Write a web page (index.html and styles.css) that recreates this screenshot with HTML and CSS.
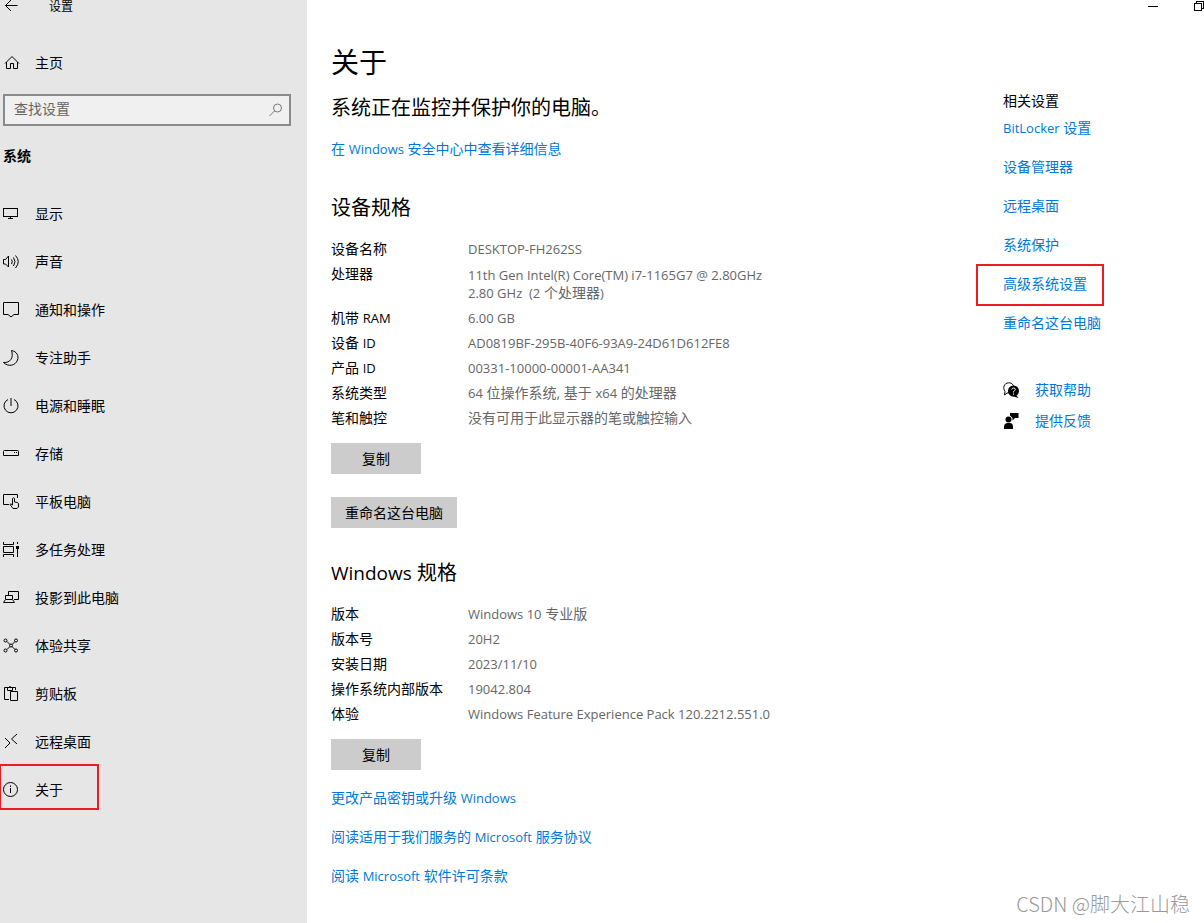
FILE: index.html
```html
<!DOCTYPE html>
<html lang="zh-CN">
<head>
<meta charset="utf-8">
<title>设置</title>
<meta name="viewport" content="width=device-width, initial-scale=1">
<link rel="stylesheet" href="styles.css">
</head>
<body>
<div class="app">
  <div class="sidebar">
    <header class="titlebar">
      <button class="icon-button" type="button" aria-label="返回">
        <svg class="icon" viewBox="0 0 16 16"><path d="M14.500 6.500H2.500M8 1L2.500 6.500L8 12"/></svg>
      </button>
      <span>设置</span>
    </header>
    <a class="home" href="#">
      <svg class="icon" viewBox="0 0 16 16"><path d="M1 8.500L8 1.500L15 8.500M2.500 7V13.500H6.500V8.500H9.500V13.500H13.500V7"/></svg>
      <span>主页</span>
    </a>
    <form class="search">
      <input class="search-input" type="text" aria-label="查找设置" placeholder="查找设置">
      <button class="search-button" type="button" aria-label="搜索">
        <svg class="icon" viewBox="0 0 16 16"><circle cx="9.500" cy="6" r="4"/><path d="M6.500 9L1.500 14"/></svg>
      </button>
    </form>
    <h2 class="group">系统</h2>
    <nav class="nav" aria-label="系统">
      <a class="nav-item" href="#"><svg class="icon crisp" viewBox="0 0 16 16"><path d="M.5 2.500H14.500V10.500H.5ZM7.500 11V13M5 12.500H10"/></svg><span>显示</span></a>
      <a class="nav-item" href="#"><svg class="icon" viewBox="0 0 16 16"><path d="M.5 5.500H2.500L5.500 2V13L2.500 10H.5ZM8.500 5.500Q10 7.500 8.500 10M10.500 3.500Q13.500 7.500 10.500 12M12.500 1.500Q18 7.500 12.500 14"/></svg><span>声音</span></a>
      <a class="nav-item" href="#"><svg class="icon" viewBox="0 0 16 16"><path d="M.5 .5H15.500V12.500H11L8 15L5 12.500H.5Z"/></svg><span>通知和操作</span></a>
      <a class="nav-item" href="#"><svg class="icon" viewBox="0 0 16 16"><path d="M8.500 .500C14 1.500 16 6 14.500 10C12.500 16 5 17 .5 12.500C7 13 11 8 8.500 .500Z"/></svg><span>专注助手</span></a>
      <a class="nav-item" href="#"><svg class="icon" viewBox="0 0 16 16"><path d="M5 1.500A7 7 0 1 0 11 1.500M8 0V8"/></svg><span>电源和睡眠</span></a>
      <a class="nav-item" href="#"><svg class="icon" viewBox="0 0 16 16"><path d="M.5 5.500Q.5 4.500 1.500 4.500H14.500Q15.500 4.500 15.500 5.500V9.500H.5Z"/><path class="fill" d="M11 6h1v1h-1zM13 6h1v1h-1z"/></svg><span>存储</span></a>
      <a class="nav-item" href="#"><svg class="icon" viewBox="0 0 16 16"><path d="M6 10.500H.5V.5H14.500V4M9.500 11V4.500Q10.500 3 11.500 4.500V8L14.500 8.500Q15.500 9 15.500 10V13L14 14.500H10L7 10.500Q7.500 9 9.500 11"/></svg><span>平板电脑</span></a>
      <a class="nav-item" href="#"><svg class="icon" viewBox="0 0 16 16"><path d="M.5 0V2.500H10.500V0M.5 4.500H10.500V10.500H.5ZM.5 15V12.500H10.500V15M14.500 0V2M14.500 6V15"/><path class="fill" d="M13 4h3v3h-3z"/></svg><span>多任务处理</span></a>
      <a class="nav-item" href="#"><svg class="icon" viewBox="0 0 16 16"><path d="M5.500 5V1.500H15.500V9.500H11M2.500 9V5.500H9.500V9M.5 12.500L2.500 9.500H9.500L11.500 12.500Z"/></svg><span>投影到此电脑</span></a>
      <a class="nav-item" href="#"><svg class="icon" viewBox="0 0 16 16"><circle cx="2.500" cy="2.500" r="1.500"/><circle cx="13" cy="2.500" r="1.500"/><circle cx="2.500" cy="12.500" r="1.500"/><circle cx="13" cy="12.500" r="1.500"/><circle cx="8" cy="7.500" r="1.500"/><path d="M4 3.500L7 6.500M12 3.500L9 6.500M4 11.500L7 8.500M12 11.500L9 8.500"/></svg><span>体验共享</span></a>
      <a class="nav-item" href="#"><svg class="icon" viewBox="0 0 16 16"><path d="M6 13.500H1.500V1.500H12.500V4M4.500 4.500V1.500H6Q7 -1 8 1.500H9.500V4.500ZM7.500 5.500H14.500V14.500H7.500Z"/></svg><span>剪贴板</span></a>
      <a class="nav-item" href="#"><svg class="icon" viewBox="0 0 16 16"><path d="M2 4L7 9L2 14M14 0L8.500 5L14 10"/></svg><span>远程桌面</span></a>
      <a class="nav-item current" href="#" aria-current="page"><svg class="icon" viewBox="0 0 16 16"><circle cx="7.500" cy="7.500" r="7"/><path d="M7.500 6V11M7.500 3.500V5"/></svg><span>关于</span></a>
    </nav>
  </div>

  <div class="page">
    <div class="window-controls">
      <button class="icon-button" type="button" aria-label="最小化"><svg class="icon crisp" viewBox="0 0 16 16"><path d="M3 6.500H13"/></svg></button>
      <button class="icon-button" type="button" aria-label="还原"><svg class="icon crisp" viewBox="0 0 16 16"><path d="M3.500 3.500H10.500V10.500H3.500ZM5.500 3V1.500H12.500V8.500H11"/></svg></button>
    </div>
    <div class="columns">
      <main class="content">
        <h1 class="title">关于</h1>
        <p class="status">系统正在监控并保护你的电脑。</p>
        <a class="link" href="#">在 <span class="latin">Windows</span> 安全中心中查看详细信息</a>

        <h2 class="section-title">设备规格</h2>
        <dl class="specs">
          <dt>设备名称</dt><dd><span class="latin">DESKTOP-FH262SS</span></dd>
          <dt>处理器</dt><dd class="multiline"><span class="latin">11th Gen Intel(R) Core(TM) i7-1165G7 @ 2.80GHz</span><br><span class="latin">2.80 GHz&nbsp; (2</span> 个处理器<span class="latin">)</span></dd>
          <dt>机带 <span class="latin">RAM</span></dt><dd><span class="latin">6.00 GB</span></dd>
          <dt>设备 <span class="latin">ID</span></dt><dd><span class="latin">AD0819BF-295B-40F6-93A9-24D61D612FE8</span></dd>
          <dt>产品 <span class="latin">ID</span></dt><dd><span class="latin">00331-10000-00001-AA341</span></dd>
          <dt>系统类型</dt><dd><span class="latin">64</span> 位操作系统, 基于 <span class="latin">x64</span> 的处理器</dd>
          <dt>笔和触控</dt><dd>没有可用于此显示器的笔或触控输入</dd>
        </dl>
        <div class="actions">
          <button class="button" type="button">复制</button>
          <button class="button" type="button">重命名这台电脑</button>
        </div>

        <h2 class="section-title"><span class="latin-large">Windows</span> 规格</h2>
        <dl class="specs">
          <dt>版本</dt><dd><span class="latin">Windows 10</span> 专业版</dd>
          <dt>版本号</dt><dd><span class="latin">20H2</span></dd>
          <dt>安装日期</dt><dd><span class="latin">2023/11/10</span></dd>
          <dt>操作系统内部版本</dt><dd><span class="latin">19042.804</span></dd>
          <dt>体验</dt><dd><span class="latin">Windows Feature Experience Pack 120.2212.551.0</span></dd>
        </dl>
        <div class="actions">
          <button class="button" type="button">复制</button>
        </div>
        <div class="links">
          <a class="link" href="#">更改产品密钥或升级 <span class="latin">Windows</span></a>
          <a class="link" href="#">阅读适用于我们服务的 <span class="latin">Microsoft</span> 服务协议</a>
          <a class="link" href="#">阅读 <span class="latin">Microsoft</span> 软件许可条款</a>
        </div>
      </main>

      <aside class="related">
        <h2 class="related-title">相关设置</h2>
        <div class="links">
          <a class="link" href="#"><span class="latin">BitLocker</span> 设置</a>
          <a class="link" href="#">设备管理器</a>
          <a class="link" href="#">远程桌面</a>
          <a class="link" href="#">系统保护</a>
          <a class="link marked" href="#">高级系统设置</a>
          <a class="link" href="#">重命名这台电脑</a>
        </div>
        <div class="support">
          <a class="link support-link" href="#"><svg class="icon" viewBox="0 0 16 16"><path d="M8 10.500L4 11L1.500 13L2 9.500C-.5 6 1 1 5.500 .8C8 .7 10 2 10.500 4"/><circle class="fill" cx="10.500" cy="9" r="5.500"/><path class="fill" d="M13 13L15.500 16L9 14Z"/><path class="mark" d="M8.800 7.500Q9 6 10.500 6Q12.300 6 12.300 7.500Q12.200 8.500 10.500 9.500V10.500M10.500 11.500V12.700"/></svg><span>获取帮助</span></a>
          <a class="link support-link" href="#"><svg class="icon" viewBox="0 0 16 16"><circle class="fill" cx="5.500" cy="6.500" r="3"/><path class="fill" d="M1 16V14Q1 10 5 10H7Q10 10 10 14V16ZM7 0H15.500V5H12L9.500 7.500V5L7 2.500Z"/></svg><span>提供反馈</span></a>
        </div>
      </aside>
    </div>
    <div class="watermark">CSDN @脚大江山稳</div>
  </div>
</div>
</body>
</html>
```
FILE: styles.css
```css
*,
*::before {
  box-sizing: border-box;
}

body {
  margin: 0;
  background: #fff;
  color: #000;
  font-family: "Open Sans", "Noto Sans CJK SC", sans-serif;
  font-size: 14px;
  line-height: 18px;
}

h1,
h2,
p,
dl,
dd {
  margin: 0;
  font-weight: 400;
}

a {
  color: inherit;
  text-decoration: none;
}

button,
input {
  font: inherit;
  color: inherit;
}

.latin {
  font-size: 13px;
}

.latin-large {
  font-size: 19px;
}

.icon {
  display: block;
  flex: none;
  width: 16px;
  height: 16px;
  fill: none;
  stroke: currentColor;
  overflow: visible;
}

.icon .fill {
  fill: currentColor;
  stroke: none;
}

.icon .mark {
  stroke: #fff;
}

.crisp {
  shape-rendering: crispEdges;
}

.icon-button {
  padding: 0;
  border: 0;
  background: none;
}

.app {
  display: grid;
  grid-template-columns: 307px 1fr;
  min-height: 100vh;
}

.sidebar {
  background: #e6e6e6;
  padding: 0 16px 0 3px;
}

.titlebar {
  display: flex;
  align-items: center;
  gap: 30px;
  height: 14px;
  font-size: 12px;
}

.home {
  display: flex;
  align-items: center;
  gap: 15px;
  height: 48px;
  margin: 25px 0 7px;
  padding-left: 1px;
}

.search {
  display: flex;
  align-items: center;
  height: 32px;
  padding-right: 5px;
  border: 2px solid #8a8a8a;
  background: #f0f0f0;
}

.search-input {
  flex: 1;
  min-width: 0;
  padding: 0 9px 2px;
  border: 0;
  outline: 0;
  background: none;
}

.search-input::placeholder {
  color: #666;
  opacity: 1;
}

.search-button {
  padding: 0;
  border: 0;
  background: none;
  color: #777;
}

.group {
  margin: 21px 0 25px;
  font-size: 14px;
  font-weight: 700;
}

.nav-item {
  display: flex;
  align-items: center;
  gap: 16px;
  height: 48px;
}

.current {
  position: relative;
}

.current::before {
  content: "";
  position: absolute;
  left: -4px;
  top: -2px;
  width: 100px;
  height: 46px;
  border: 2px solid #ed1c24;
}

.page {
  position: relative;
}

.window-controls {
  display: flex;
  justify-content: flex-end;
  gap: 30px;
  height: 14px;
  padding-right: 1px;
  overflow: hidden;
}

.window-controls .icon-button:last-child {
  margin-right: -4px;
}

.columns {
  display: flex;
  justify-content: space-between;
  padding: 30px 24px 0;
}

.title {
  font-size: 28px;
  line-height: 36px;
}

.status {
  margin: 15px 0 19px;
  font-size: 20px;
  line-height: 26px;
}

.link {
  display: block;
  color: #0078d7;
}

.section-title {
  margin: 37px 0 19px;
  font-size: 20px;
  line-height: 26px;
}

.specs {
  display: grid;
  grid-template-columns: 137px 1fr;
  row-gap: 7px;
}

.specs dd {
  color: #666;
}

.specs .multiline {
  padding-top: 1px;
}

.actions {
  display: flex;
  flex-direction: column;
  align-items: flex-start;
  gap: 23px;
  margin-top: 16px;
}

.actions + .section-title {
  margin-top: 32px;
}

.button {
  min-width: 90px;
  height: 31px;
  padding: 0 14px;
  border: 0;
  background: #ccc;
}

.links {
  display: flex;
  flex-direction: column;
  gap: 21px;
}

.actions + .links {
  margin-top: 19px;
}

.related {
  width: 177px;
  padding-top: 48px;
}

.related-title {
  margin-bottom: 9px;
  font-size: 14px;
}

.marked {
  position: relative;
}

.marked::before {
  content: "";
  position: absolute;
  left: -27px;
  top: -11px;
  width: 128px;
  height: 42px;
  border: 2px solid #ed1c24;
}

.support {
  display: flex;
  flex-direction: column;
  gap: 13px;
  margin-top: 49px;
}

.support-link {
  display: flex;
  align-items: center;
  gap: 16px;
}

.support-link .icon {
  color: #000;
}

.watermark {
  position: absolute;
  right: 14px;
  bottom: 6px;
  color: #999;
  font-family: "Noto Sans CJK SC", sans-serif;
  font-size: 20px;
  font-weight: 300;
  line-height: 26px;
}
```
